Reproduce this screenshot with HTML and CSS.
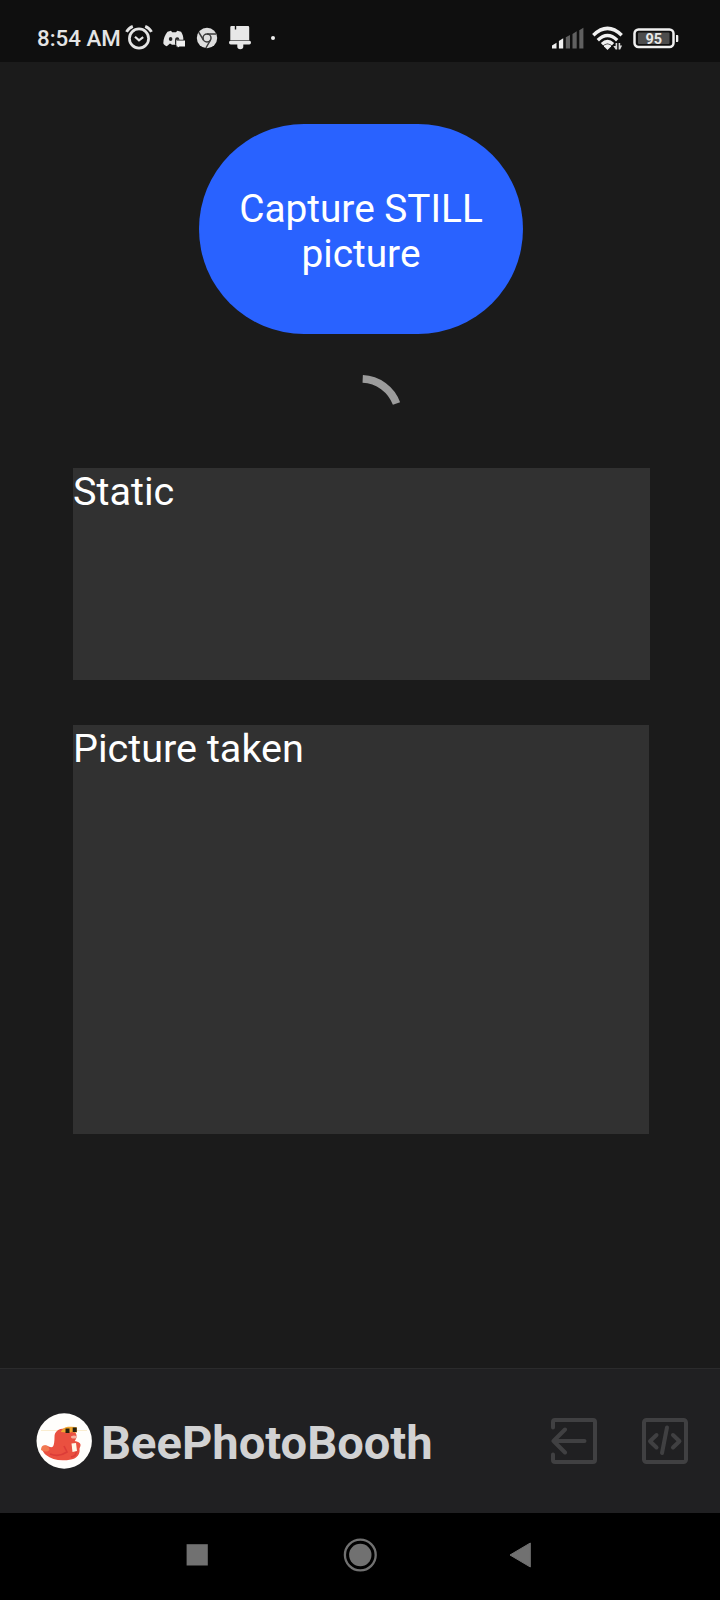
FILE: index.html
```html
<!DOCTYPE html>
<html lang="en">
<head>
<meta charset="utf-8">
<title>BeePhotoBooth</title>
<link rel="stylesheet" href="styles.css">
</head>
<body>
<div class="screen">
  <header class="status">
    <span class="clock">8:54 AM</span>
    <svg class="alarm" width="28" height="28" viewBox="0 0 28 28" fill="none" stroke="#e4e4e4">
      <circle cx="14" cy="15.500" r="9.600" stroke-width="2.700"/>
      <path d="M10 13.700l4 3.600 4.200-3.200" stroke-width="2.200"/>
      <path d="M1.500 8.900Q3.600 5 7.800 3.400M26.500 8.900Q24.400 5 20.200 3.400" stroke-width="2.900"/>
    </svg>
    <svg class="discord" width="22" height="18" viewBox="0 0 22 18">
      <path fill="#e4e4e4" d="M4.500 1.800L8 .8l1.200 1.500h3.800L14.300.8l3.800 1c1.600 2.600 2.300 5 2.300 8H14v5H9L7 13.500l-3.200 2.700C2 15.500.8 14.600.3 13.200.3 8.800 2 4.800 4.500 1.800z"/>
      <ellipse cx="7.600" cy="9" rx="1.800" ry="2" fill="#252525"/>
      <path d="M12 10.500q0-3.200 2.300-3.200 1.800 0 2.200 2.400h-3v5H12z" fill="#252525"/>
      <path fill="#f0f0f0" d="M13.500 10.500H22v6h-5.500L14.800 17.500v-1h-1.300z"/>
    </svg>
    <svg class="chrome" width="22" height="22" viewBox="0 0 22 22">
      <circle cx="11" cy="11" r="10.200" fill="#dedede"/>
      <g fill="none" stroke="#3a3a3a" stroke-width="1.500">
        <circle cx="11" cy="11" r="4"/>
        <path d="M11 7h9.200M7.500 13L2.700 5.200M14.500 13l-4.600 8"/>
      </g>
    </svg>
    <svg class="bell" width="24" height="25" viewBox="0 0 24 25" fill="#e8e8e8">
      <path d="M3.500 1H6.800v3.500h1.400V1H20q1.200 0 1.200 1.200V15.200H2.300V2.200Q2.300 1 3.500 1z"/>
      <path d="M2.500 15.800h19q1.500 0 1.500 1.700 0 1.900-1.700 1.900h-6V21.500q0 2.700-3 2.700t-3-2.700v-2.100H2.800Q1 19.400 1 17.500q0-1.700 1.500-1.700z"/>
    </svg>
    <span class="dot"></span>
    <svg class="signal" width="32" height="22" viewBox="0 0 32 22">
      <path fill="#f0f0f0" d="M0 21.500V18.500l4.500-2.700v5.700zM6.900 21.500V14l4.300-2.800v10.300z"/>
      <path fill="#606060" d="M13.800 21.500V10.300L18 8v13.500zM20.500 21.500V7l4.200-2.700v17.200zM27.300 21.500V3.300L31.400.8v20.700z"/>
    </svg>
    <svg class="wifi" width="32" height="26" viewBox="0 0 32 26">
      <g fill="none" stroke="#f0f0f0" stroke-width="3.400">
        <path d="M1.300 9.200Q15.500-4.500 29.700 9.200"/>
        <path d="M5.800 14.200Q15.500 4.800 25.200 14.200"/>
        <path d="M10 18.300Q15.500 13 21 18.300"/>
      </g>
      <path fill="#f0f0f0" d="M12 19.500q3.500-2.500 7 0v1L15.500 24 12 20.500z"/>
      <path fill="#d8d8d8" d="M23.600 17h1.600v6.500h-1.600l-2.300-3.500h2.300zM26.600 23.500V17h1.600v2.500h1.900l-1.900 4z"/>
    </svg>
    <svg class="battery" width="46" height="22" viewBox="0 0 46 22">
      <rect x="1.500" y="1.500" width="39" height="17.500" rx="4" fill="none" stroke="#f0f0f0" stroke-width="2.500"/>
      <rect x="5" y="4.600" width="31.500" height="11.300" rx="1" fill="#4d4d4d"/>
      <path fill="#f0f0f0" d="M43 7h1.300q1 0 1 1v5q0 1-1 1H43z"/>
      <text x="20.800" y="15.700" text-anchor="middle" class="level">95</text>
    </svg>
  </header>

  <main class="content">
    <button class="capture">Capture STILL<br>picture</button>
    <svg class="spinner" width="84" height="84" viewBox="0 0 84 84">
      <path d="M43.700 4.800A37.800 37.800 0 0 1 77.500 29.500" fill="none" stroke="#9c9c9c" stroke-width="7.700"/>
    </svg>
    <section class="panel panel-static">Static</section>
    <section class="panel panel-picture">Picture taken</section>
  </main>

  <footer class="appbar">
    <svg class="logo" width="56" height="56" viewBox="0 0 56 56">
      <circle cx="28.200" cy="28" r="27.700" fill="#fffefc"/>
      <path d="M5 17.500h46" stroke="#faedd0" stroke-width="1" fill="none"/>
      <path fill="#ea5040" d="M18.500 24C18.500 18.500 22.500 15.500 28.500 15.500c6 0 11 2 12 6.500.3 2.700-.6 4.300-1.700 6 2.700.5 5.500 1.500 5.700 3.500.3 2-1 3-1 4.500.8 5-2.500 9.500-8.500 10.500-10 2-19 .5-25-4.500-4-3.500-5-8-1.500-9.300 3.500-1.200 6 3.300 8.500.8Q18.500 31 18.500 24z"/>
      <path fill="#f17850" d="M5 37q0-5 4-4.800 4 .3 4.500 4.800-3 3-8.500 0z"/>
      <path fill="none" stroke="#dc3c38" stroke-width="1.600" d="M14 41q9 3.500 17-2l-3-6M40 38q1 5-5 6"/>
      <path fill="#f0a52f" d="M25 18.500q2-4 7-4.700 8-.3 9 .7v5h-4l-1-1-1 1h-5l-5-.5z"/>
      <path fill="#252010" d="M29.500 15.500h4v4.500h-4zM36.700 14.500h4V19h-4z"/>
      <path fill="#fff7e8" d="M35.500 30.500l4.500-.5 1 8-4.500 1z"/>
      <ellipse cx="38" cy="24" rx="3" ry="1.500" fill="#f6b0a0"/>
    </svg>
    <h1 class="title">BeePhotoBooth</h1>
    <svg class="tool exit" width="46" height="46" viewBox="0 0 46 46">
      <path d="M2 9.500V4q0-2 2-2h38q2 0 2 2v38q0 2-2 2H4q-2 0-2-2v-5.500M33.500 23H2.500M14 11.500L2.500 23 14 34.500"/>
    </svg>
    <svg class="tool code" width="46" height="46" viewBox="0 0 46 46">
      <rect x="2" y="2" width="42" height="42" rx="2.500"/>
      <path d="M14.500 17L8 23.200l6.500 6.300M31 17l6.500 6.200L31 29.500M25 9.500l-5 25.500"/>
    </svg>
  </footer>

  <nav class="nav">
    <svg class="recent" width="22" height="22" viewBox="0 0 22 22"><path fill="#717171" d="M.6.2h21.200v21.300H.6z"/></svg>
    <svg class="home" width="34" height="34" viewBox="0 0 34 34">
      <circle cx="17.300" cy="17" r="15.400" fill="none" stroke="#717171" stroke-width="2.300"/>
      <circle cx="17.300" cy="17" r="11.200" fill="#717171"/>
    </svg>
    <svg class="back" width="22" height="26" viewBox="0 0 22 26"><path fill="#717171" stroke="#717171" stroke-linejoin="round" d="M1 13L21.300 1v24z"/></svg>
  </nav>
</div>
</body>
</html>
```
FILE: styles.css
```css
* { box-sizing: border-box; }
body { margin: 0; background: #1b1b1b; font-family: Roboto, "Liberation Sans", sans-serif; }
svg { display: block; flex: none; }

.screen { width: 720px; height: 1600px; display: flex; flex-direction: column; overflow: hidden; }

.status { height: 62px; background: #0f0f0f; display: flex; align-items: flex-start; padding-left: 37px; flex: none; }
.clock { width: 84px; margin-top: 25px; font-size: 22.3px; line-height: 27px; font-weight: 500; color: #e4e4e4; white-space: nowrap; }
.alarm { margin: 23px 0 0 4px; }
.discord { margin: 30px 0 0 10px; }
.chrome { margin: 27px 0 0 11px; }
.bell { margin: 25px 0 0 10px; }
.dot { width: 4px; height: 4px; margin: 36px 0 0 19px; border-radius: 50%; background: #eee; }
.signal { margin: 27px 0 0 277px; }
.wifi { margin: 26px 0 0 8px; }
.battery { margin: 28px 0 0 9px; }
.level { font-size: 14.5px; font-weight: 700; fill: #e8e8e8; }

.content { flex: 1; display: flex; flex-direction: column; align-items: flex-start; padding: 62px 0 0 73px; }
.capture { width: 324px; height: 210px; margin-left: 126px; padding: 4px 0 0; border: 0; border-radius: 105px; background: #2962ff; color: #fff; font-family: inherit; font-size: 38.8px; line-height: 45px; text-align: center; }
.spinner { margin: 40px 0 0 246px; }
.panel { padding-top: 1px; background: #313131; color: #fff; font-size: 39.6px; line-height: 46px; }
.panel-static { width: 577px; height: 212px; margin-top: 10px; }
.panel-picture { width: 576px; height: 409px; margin-top: 45px; }

.appbar { height: 145px; flex: none; border-top: 1px solid #2b2b2c; background: #202022; display: flex; align-items: center; padding-left: 36px; }
.title { width: 330px; margin: 4px 0 0 9px; font-size: 47.1px; line-height: 56px; font-weight: 700; color: #d2d2d3; white-space: nowrap; }
.tool { fill: none; stroke: #404042; stroke-width: 4; stroke-linejoin: round; stroke-linecap: round; }
.exit { margin-left: 120px; }
.code { margin-left: 45px; }

.nav { height: 87px; flex: none; background: #000; display: flex; align-items: center; padding: 0 0 4px 186px; }
.home { margin-left: 135px; }
.back { margin-left: 132px; }
```
